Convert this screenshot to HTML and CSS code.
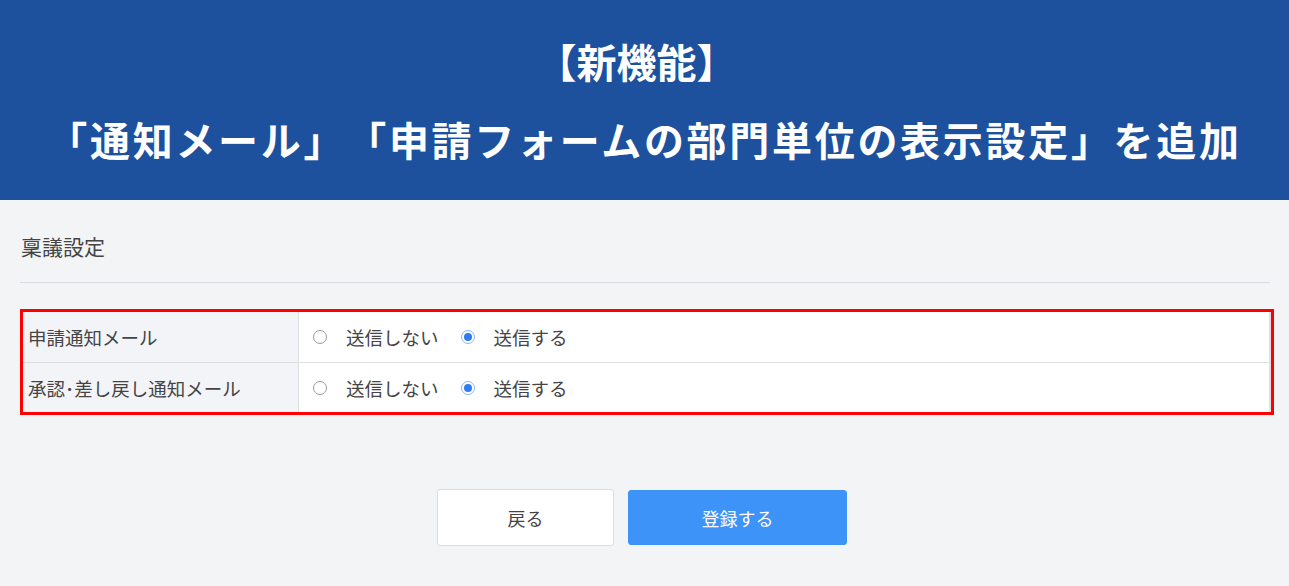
FILE: index.html
```html
<!DOCTYPE html>
<html lang="ja">
<head>
<meta charset="utf-8">
<title>稟議設定</title>
<link rel="stylesheet" href="styles.css">
</head>
<body>
<header class="banner">
  <div class="banner-line1">【新機能】</div>
  <div class="banner-line2">「通知メール」「申請フォームの部門単位の表示設定」を追加</div>
</header>
<main class="content">
  <h2 class="section-title">稟議設定</h2>
  <div class="highlight">
    <div class="settings">
      <div class="row">
        <div class="label">申請通知メール</div>
        <div class="value">
          <span class="option"><span class="radio"></span>送信しない</span>
          <span class="option"><span class="radio checked"></span>送信する</span>
        </div>
      </div>
      <div class="row">
        <div class="label">承認･差し戻し通知メール</div>
        <div class="value">
          <span class="option"><span class="radio"></span>送信しない</span>
          <span class="option"><span class="radio checked"></span>送信する</span>
        </div>
      </div>
    </div>
  </div>
  <div class="actions">
    <button class="btn btn-back">戻る</button>
    <button class="btn btn-submit">登録する</button>
  </div>
</main>
</body>
</html>
```

FILE: styles.css
```css
* { box-sizing: border-box; }
html, body { margin: 0; padding: 0; }
body {
  background: #f3f4f6;
  font-family: "Noto Sans CJK JP", "Noto Sans", sans-serif;
  color: #333;
  width: 1289px;
  height: 586px;
  overflow: hidden;
  text-spacing-trim: space-all;
}
.banner {
  height: 200px;
  background: #1d519d;
  color: #fff;
  font-weight: 700;
  text-align: center;
  padding-top: 36px;
}
.banner-line1 {
  font-size: 40px;
  line-height: 50px;
  height: 50px;
  padding-right: 16px;
}
.banner-line2 {
  font-size: 40px;
  line-height: 50px;
  height: 50px;
  margin-top: 28px;
  letter-spacing: 2.7px;
}
.content {
  padding: 0 15px 0 20px;
}
.section-title {
  margin: 31px 4px 0 0;
  padding: 0 0 21px 1px;
  font-size: 21px;
  font-weight: 400;
  line-height: 30px;
  color: #444;
  border-bottom: 1px solid #d6dbe2;
}
.highlight {
  margin-top: 26px;
  border: 3px solid #ff0000;
}
.settings {
  background: #fff;
  border-right: 2px solid #dcdfe4;
}
.row {
  display: flex;
  height: 50px;
}
.row + .row {
  border-top: 1px solid #dcdfe4;
}
.label {
  width: 276px;
  background: #f3f4f7;
  border-right: 1px solid #dcdfe4;
  display: flex;
  align-items: center;
  padding-left: 5px;
  font-size: 18.5px;
  color: #444;
}
.value {
  flex: 1;
  display: flex;
  align-items: center;
  padding-left: 14px;
  font-size: 18.5px;
  color: #444;
}
.option {
  display: inline-flex;
  align-items: center;
  margin-right: 22px;
}
.radio {
  width: 14px;
  height: 14px;
  border-radius: 50%;
  border: 1px solid #9a9a9a;
  background: #fff;
  margin-right: 19px;
  display: inline-block;
  position: relative;
}
.radio.checked {
  border-color: #8ab8f5;
}
.radio.checked::after {
  content: "";
  position: absolute;
  left: 2px;
  top: 2px;
  width: 8px;
  height: 8px;
  border-radius: 50%;
  background: #2f7ef0;
}
.actions {
  display: flex;
  justify-content: center;
  gap: 14px;
  margin-top: 74px;
  padding-right: 10px;
}
.btn {
  font-family: inherit;
  font-size: 18px;
  height: 57px;
  border-radius: 3px;
  cursor: pointer;
}
.btn-back {
  width: 177px;
  background: #fff;
  border: 1px solid #d9dce1;
  color: #444;
}
.btn-submit {
  width: 219px;
  height: 55px;
  margin-top: 1px;
  background: #3d93f7;
  border: 1px solid #3d93f7;
  color: #fff;
}
```
